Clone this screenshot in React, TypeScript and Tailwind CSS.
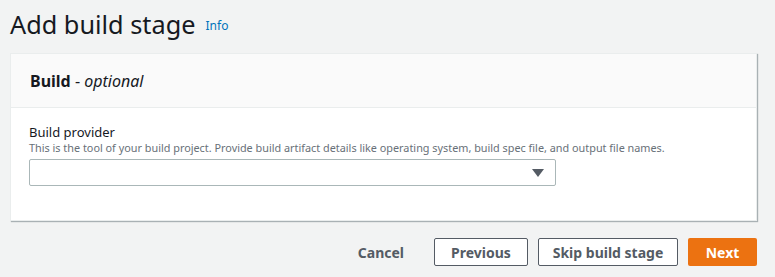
import React from "react";

export default function App() {
  return (
    <div
      className="w-[775px] h-[277px] bg-[#f2f3f3] overflow-hidden text-[#16191f]"
      style={{ fontFamily: "'Noto Sans', Roboto, sans-serif" }}
    >
      <div className="flex items-end pl-[10px] pt-[4px] h-[40px]">
        <h1 className="text-[25.3px] leading-[32px] font-normal">Add build stage</h1>
        <a className="ml-[10px] mb-[6px] text-[12px] leading-[16px] text-[#0073bb]">Info</a>
      </div>
      <div className="mt-[13px] ml-[10px] w-[747px] bg-white border border-[#eaeded] shadow-[1px_1px_1px_0_rgba(0,28,36,0.3)]">
        <div className="h-[54px] bg-[#fafafa] border-b border-[#eaeded] flex items-center px-[19px]">
          <h2 className="text-[16px] font-bold">
            Build <span className="font-normal">-</span> <span className="font-normal italic">optional</span>
          </h2>
        </div>
        <div className="px-[18px] pt-[15px] pb-[34px]">
          <div className="text-[13px] leading-[18px]">Build provider</div>
          <div className="text-[10.85px] leading-[14px] text-[#687078]">
            This is the tool of your build project. Provide build artifact details like operating system, build spec file, and output file names.
          </div>
          <div className="mt-[4px] w-[527px] h-[27px] border border-[#aab7b8] rounded-[2px] flex items-center justify-end pr-[11px]">
            <svg width="12" height="8" viewBox="0 0 12 8">
              <path d="M0 0 L12 0 L6 8 Z" fill="#545b64" />
            </svg>
          </div>
        </div>
      </div>
      <div className="flex items-center justify-end pr-[18px] mt-[17px] gap-[10px]">
        <button className="px-[20px] h-[28px] text-[14px] font-bold text-[#545b64]">Cancel</button>
        <button className="w-[94px] h-[28px] border border-[#545b64] rounded-[2px] bg-white text-[14px] font-bold text-[#545b64]">Previous</button>
        <button className="w-[140px] h-[28px] border border-[#545b64] rounded-[2px] bg-white text-[14px] font-bold text-[#545b64]">Skip build stage</button>
        <button className="w-[69px] h-[28px] rounded-[2px] bg-[#ec7211] text-[14px] font-bold text-white">Next</button>
      </div>
    </div>
  );
}
